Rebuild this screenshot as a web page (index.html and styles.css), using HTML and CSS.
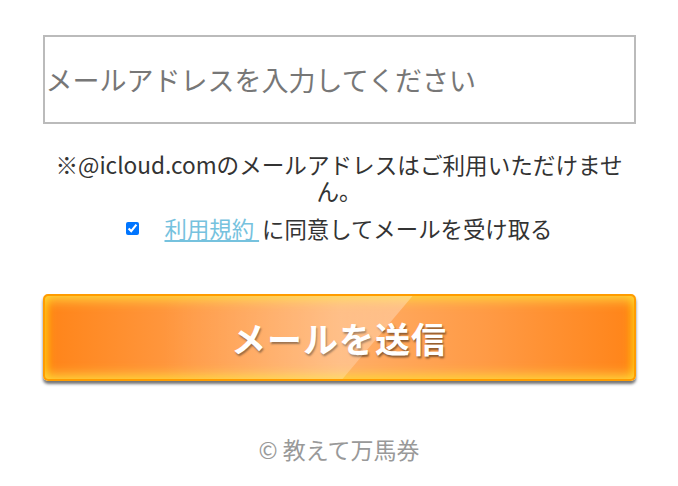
FILE: index.html
```html
<!DOCTYPE html>
<html lang="ja">
<head>
    <meta charset="UTF-8">
    <meta name="viewport" content="width=device-width, initial-scale=1.0">
    <title>メール登録</title>
    <link rel="stylesheet" href="styles.css">
</head>
<body>
    <form class="signup">
        <input class="email" type="email" placeholder="メールアドレスを入力してください">

        <p class="notice">※@icloud.comのメールアドレスはご利用いただけません。</p>

        <label class="agree">
            <input type="checkbox" checked>
            <a href="#">利用規約 </a>に同意してメールを受け取る
        </label>

        <button class="submit" type="button">メールを送信</button>
    </form>

    <footer class="footer">© 教えて万馬券</footer>
</body>
</html>
```

FILE: styles.css
```css
body {
    margin: 0;
    background-color: #fff;
    color: #333;
    font-family: "Noto Sans CJK JP", "Noto Sans", sans-serif;
}

.signup {
    width: 593px;
    margin: 35px auto 0;
    display: flex;
    flex-direction: column;
    align-items: center;
}

.email {
    box-sizing: border-box;
    width: 100%;
    height: 89px;
    border: 2px solid #bbb;
    padding: 0 1px;
    font-family: inherit;
    font-size: 27px;
    color: #333;
    outline: none;
}

.email::placeholder {
    color: #777;
}

.notice {
    margin: 28px 0 0;
    padding: 0;
    font-size: 22.6px;
    line-height: 26px;
    text-align: center;
}

.agree {
    display: flex;
    align-items: center;
    margin-top: 9px;
    font-size: 22.4px;
    line-height: 30px;
}

.agree input {
    width: 13px;
    height: 13px;
    margin: 0 26px 0 0;
}

.agree a {
    color: #76c2de;
    text-decoration: underline;
    white-space: pre;
    margin-right: 3px;
}

.submit {
    position: relative;
    overflow: hidden;
    box-sizing: border-box;
    width: 100%;
    height: 87px;
    margin-top: 51px;
    border: 2px solid #ff9c00;
    border-radius: 5px;
    background: linear-gradient(to right, #ff8418 0%, #ff9a45 25%, #ffae68 50%, #ff9a45 75%, #ff8418 100%);
    box-shadow:
        inset 0 10px 12px -6px #ffd43c,
        inset 0 -10px 12px -6px #ffd43c,
        inset 8px 0 10px -6px #ffc000,
        inset -8px 0 10px -6px #ffc000,
        0 3px 3px rgba(0, 0, 0, 0.55);
    color: #fff;
    font-family: inherit;
    font-size: 35px;
    font-weight: bold;
    letter-spacing: 1px;
    text-shadow: 1px 2px 2px rgba(0, 0, 0, 0.45);
    cursor: pointer;
}

/* glossy diagonal highlight */
.submit::before {
    content: "";
    position: absolute;
    top: 0;
    left: 0;
    width: 100%;
    height: 100%;
    background: linear-gradient(to right, rgba(255, 255, 255, 0) 20%, rgba(255, 255, 255, 0.3) 62%);
    clip-path: polygon(0 0, 368px 0, 298px 100%, 0 100%);
    pointer-events: none;
}

.footer {
    margin-top: 53px;
    text-align: center;
    font-size: 23px;
    line-height: 30px;
    color: #999;
}
```
